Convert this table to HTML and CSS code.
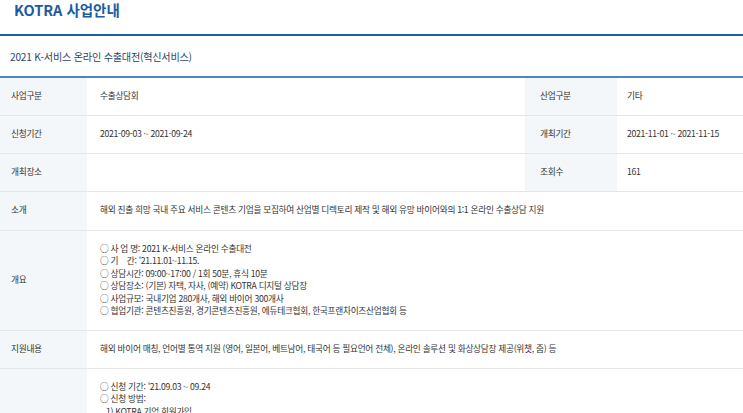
FILE: index.html
```html
<!DOCTYPE html>
<html lang="ko">
<head>
<meta charset="utf-8">
<link rel="stylesheet" href="styles.css">
</head>
<body>
<div class="page">
  <h1 class="title">KOTRA 사업안내</h1>
  <div class="subject">2021 K-서비스 온라인 수출대전(혁신서비스)</div>
  <table class="info">
    <colgroup>
      <col class="c1"><col class="c2"><col class="c3"><col class="c4">
    </colgroup>
    <tr>
      <th>사업구분</th><td>수출상담회</td>
      <th class="th2">산업구분</th><td class="td2">기타</td>
    </tr>
    <tr>
      <th>신청기간</th><td>2021-09-03 ~ 2021-09-24</td>
      <th class="th2">개최기간</th><td class="td2">2021-11-01 ~ 2021-11-15</td>
    </tr>
    <tr>
      <th>개최장소</th><td></td>
      <th class="th2">조회수</th><td class="td2">161</td>
    </tr>
    <tr class="r-intro">
      <th>소개</th><td colspan="3">해외 진출 희망 국내 주요 서비스 콘텐츠 기업을 모집하여 산업별 디렉토리 제작 및 해외 유망 바이어와의 1:1 온라인 수출상담 지원</td>
    </tr>
    <tr class="r-multi">
      <th>개요</th>
      <td colspan="3">
        <div>○ 사 업 명: 2021 K-서비스 온라인 수출대전</div>
        <div>○ 기&nbsp;&nbsp;&nbsp;&nbsp;간: '21.11.01~11.15.</div>
        <div>○ 상담시간: 09:00~17:00 / 1회 50분, 휴식 10분</div>
        <div>○ 상담장소: (기본) 자택, 자사, (예약) KOTRA 디지털 상담장</div>
        <div>○ 사업규모: 국내기업 280개사, 해외 바이어 300개사</div>
        <div>○ 협업기관: 콘텐츠진흥원, 경기콘텐츠진흥원, 에듀테크협회, 한국프랜차이즈산업협회 등</div>
      </td>
    </tr>
    <tr>
      <th>지원내용</th><td colspan="3">해외 바이어 매칭, 언어별 통역 지원 (영어, 일본어, 베트남어, 태국어 등 필요언어 전체), 온라인 솔루션 및 화상상담장 제공(위챗, 줌) 등</td>
    </tr>
    <tr class="r-multi">
      <th></th>
      <td colspan="3">
        <div>○ 신청 기간: '21.09.03 ~ 09.24</div>
        <div>○ 신청 방법:</div>
        <div class="indent">1) KOTRA 기업 회원가입</div>
      </td>
    </tr>
  </table>
</div>
</body>
</html>
```
FILE: styles.css
```css
* { box-sizing: border-box; }
html, body { margin: 0; padding: 0; background: #fff; }
body {
  font-family: "Noto Sans CJK KR", "Noto Sans", sans-serif;
  color: #333;
  overflow: hidden;
}
.page { width: 743px; }
.title {
  margin: 0;
  height: 36px;
  padding: 0 0 0 14px;
  font-size: 14.5px;
  line-height: 20px;
  font-weight: 700;
  color: #1b5ba2;
  border-bottom: 2px solid #1d5fa6;
}
.subject {
  height: 40px;
  line-height: 41px;
  padding-left: 10px;
  font-size: 10.1px;
  color: #29466a;
  letter-spacing: -0.2px;
}
.info {
  width: 743px;
  border-collapse: collapse;
  table-layout: fixed;
  border-top: 2px solid #4a86c3;
  font-size: 8.7px;
  letter-spacing: -0.3px;
}
.c1 { width: 87px; }
.c2 { width: 438px; }
.c3 { width: 92px; }
.c4 { width: 126px; }
.info th, .info td {
  height: 38px;
  padding: 0 0 0 13px;
  text-align: left;
  vertical-align: middle;
  border-bottom: 1px solid #e6e6e6;
  font-weight: 400;
  line-height: 12.5px;
}
.info th {
  background: #f3f7fa;
  padding-left: 11px;
  color: #333;
}
.info .th2 { padding-left: 15px; }
.info .td2 { padding-left: 10px; }
.r-intro th, .r-intro td { height: 39px; }
.r-multi td { padding-top: 12px; padding-bottom: 12px; }
.indent { padding-left: 6px; }
```
